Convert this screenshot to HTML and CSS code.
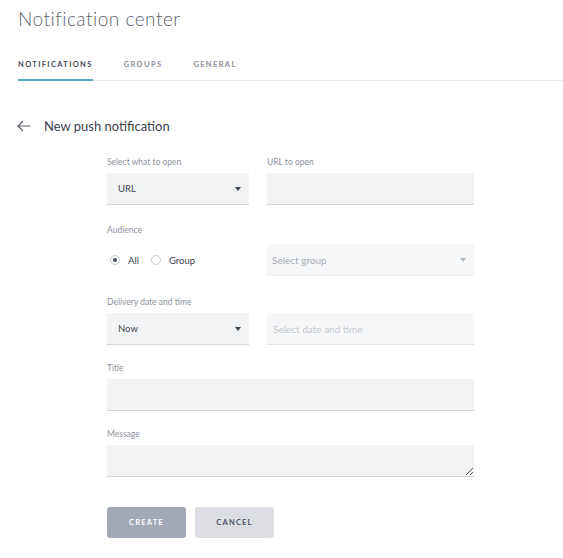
FILE: index.html
```html
<!DOCTYPE html>
<html>
<head>
<meta charset="utf-8">
<title>Notification center</title>
<link rel="stylesheet" href="styles.css">
</head>
<body>
<header class="page-head">
  <h1 class="page-title">Notification center</h1>
  <nav class="tabs">
    <a class="tab tab-active">NOTIFICATIONS</a>
    <a class="tab">GROUPS</a>
    <a class="tab">GENERAL</a>
  </nav>
</header>

<div class="back-row">
  <svg class="back-arrow" width="14" height="12" viewBox="0 0 14 12"><path d="M1 6H13.5M6 1L1 6L6 11" fill="none" stroke="#5b6070" stroke-width="1.1"/></svg>
  <span class="back-title">New push notification</span>
</div>

<form class="form">
  <div class="field">
    <label class="label">Select what to open</label>
    <div class="select"><span>URL</span><i class="caret"></i></div>
  </div>
  <div class="field">
    <label class="label">URL to open</label>
    <input class="input" type="text">
  </div>

  <div class="field row-audience">
    <label class="label">Audience</label>
    <div class="radios">
      <span class="radio radio-on"></span><span class="radio-text">All</span>
      <span class="radio"></span><span class="radio-text">Group</span>
    </div>
  </div>
  <div class="field field-bottom row-audience">
    <div class="select select-off"><span>Select group</span><i class="caret caret-off"></i></div>
  </div>

  <div class="field row-delivery">
    <label class="label">Delivery date and time</label>
    <div class="select"><span>Now</span><i class="caret"></i></div>
  </div>
  <div class="field field-bottom row-delivery">
    <input class="input input-off" type="text" placeholder="Select date and time">
  </div>

  <div class="field field-wide">
    <label class="label">Title</label>
    <input class="input" type="text">
  </div>

  <div class="field field-wide">
    <label class="label">Message</label>
    <textarea class="textarea"></textarea>
  </div>

  <div class="buttons">
    <button type="button" class="btn btn-create">CREATE</button>
    <button type="button" class="btn btn-cancel">CANCEL</button>
  </div>
</form>
</body>
</html>
```

FILE: styles.css
```css
* { box-sizing: border-box; }
body {
  margin: 0;
  background: #fff;
  font-family: "Lato", "Open Sans", sans-serif;
  color: #3d4252;
}
.page-head { padding: 7px 0 0 18px; }
.page-title {
  margin: 0;
  font-size: 19px;
  line-height: 24px;
  font-weight: 300;
  color: #5a5f6b;
  letter-spacing: 0.5px;
}
.tabs {
  display: flex;
  gap: 31px;
  margin-top: 28px;
  border-bottom: 1px solid #e9eaed;
}
.tab {
  font-size: 7.5px;
  line-height: 12px;
  font-weight: 700;
  letter-spacing: 1.35px;
  color: #8d919c;
  padding-bottom: 8px;
  margin-bottom: -1px;
  border-bottom: 2px solid transparent;
}
.tab-active { color: #444a5a; border-bottom-color: #5aa7c6; }

.back-row {
  display: flex;
  align-items: center;
  margin: 37px 0 0 17px;
  height: 16px;
}
.back-arrow { display: block; }
.back-title {
  margin-left: 13px;
  font-size: 13px;
  color: #3d4252;
}

.form {
  display: grid;
  grid-template-columns: 142px 207px;
  column-gap: 18px;
  row-gap: 17px;
  margin: 22px 0 0 107px;
  width: 367px;
}
.field { display: flex; flex-direction: column; }
.field-bottom { justify-content: flex-end; }
.field-wide { grid-column: 1 / 3; }
.row-audience { margin-top: 2px; }
.row-delivery { margin-top: 3px; }
.label {
  font-size: 8.5px;
  line-height: 12px;
  color: #8e929c;
  margin-bottom: 5px;
}
.select, .input, .textarea {
  height: 32px;
  background: #f2f3f5;
  border: none;
  border-bottom: 1px solid #d3d5da;
  border-radius: 0;
  outline: none;
  width: 100%;
  font-family: inherit;
}
.select {
  display: flex;
  align-items: center;
  justify-content: space-between;
  padding: 0 6px 0 11px;
  font-size: 9.5px;
  color: #3d4252;
}
.caret {
  width: 0; height: 0;
  border-left: 3.5px solid transparent;
  border-right: 3.5px solid transparent;
  border-top: 4px solid #3d4252;
  margin-right: 2px;
}
.select-off {
  background: #f6f7f8;
  border-bottom-color: #eceef0;
  color: #a9adb6;
  padding-left: 5px;
  font-size: 10px;
}
.caret-off { border-top-color: #b3b6bd; }
.input { padding: 0 6px; }
.input-off {
  background: #f6f7f8;
  border-bottom-color: #e3e5e8;
  font-size: 10px;
}
.input-off::placeholder { color: #c3c6cc; }
.textarea { display: block; resize: vertical; padding: 6px; }

.radios {
  display: flex;
  align-items: center;
  height: 32px;
  padding-left: 3px;
  margin-top: 3px;
}
.radio {
  width: 10px; height: 10px;
  border: 1px solid #c9ccd2;
  border-radius: 50%;
  display: flex;
  align-items: center;
  justify-content: center;
  background: #fff;
}
.radio-on::after {
  content: "";
  width: 4px; height: 4px;
  border-radius: 50%;
  background: #4a5064;
}
.radio-text {
  font-size: 9.5px;
  color: #3d4252;
  margin-left: 8px;
  margin-right: 12px;
}

.buttons {
  grid-column: 1 / 3;
  display: flex;
  gap: 9px;
  margin-top: 13px;
}
.btn {
  width: 79px;
  height: 31px;
  border: none;
  border-radius: 3px;
  font-family: inherit;
  font-size: 7.5px;
  font-weight: 700;
  letter-spacing: 1.2px;
}
.btn-create { background: #a3a8b5; color: #fff; }
.btn-cancel { background: #dcdde2; color: #4a5064; }
```
